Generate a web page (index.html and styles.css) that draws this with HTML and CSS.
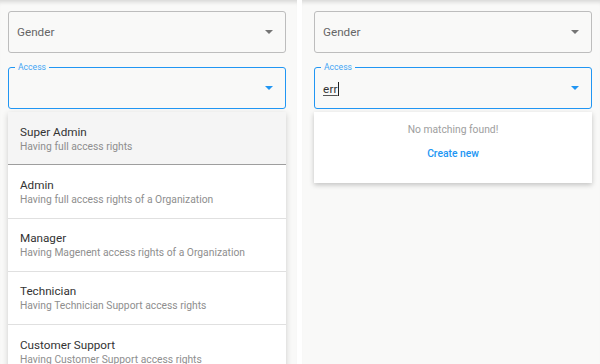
FILE: index.html
```html
<!DOCTYPE html>
<html>
<head>
<meta charset="utf-8">
<link rel="stylesheet" href="styles.css">
</head>
<body>
<div class="screens">
  <section class="panel panel-left">
    <div class="field">
      <span class="value placeholder">Gender</span>
      <svg class="arrow" width="8" height="4" viewBox="0 0 8 4"><path d="M0 0h8L4 4z" fill="#757575"/></svg>
    </div>
    <div class="field focused">
      <span class="label">Access</span>
      <span class="value"></span>
      <svg class="arrow" width="8" height="4" viewBox="0 0 8 4"><path d="M0 0h8L4 4z" fill="#2196f3"/></svg>
    </div>
    <ul class="menu">
      <li class="item active"><div class="title">Super Admin</div><div class="sub">Having full access rights</div></li>
      <li class="item"><div class="title">Admin</div><div class="sub">Having full access rights of a Organization</div></li>
      <li class="item"><div class="title">Manager</div><div class="sub">Having Magenent access rights of a Organization</div></li>
      <li class="item"><div class="title">Technician</div><div class="sub">Having Technician Support access rights</div></li>
      <li class="item"><div class="title">Customer Support</div><div class="sub">Having Customer Support access rights</div></li>
    </ul>
  </section>
  <section class="panel panel-right">
    <div class="field">
      <span class="value placeholder">Gender</span>
      <svg class="arrow" width="8" height="4" viewBox="0 0 8 4"><path d="M0 0h8L4 4z" fill="#757575"/></svg>
    </div>
    <div class="field focused">
      <span class="label">Access</span>
      <span class="value typed"><span class="word">err</span><span class="caret"></span></span>
      <svg class="arrow" width="8" height="4" viewBox="0 0 8 4"><path d="M0 0h8L4 4z" fill="#2196f3"/></svg>
    </div>
    <div class="empty">
      <div class="empty-text">No matching found!</div>
      <div class="create">Create new</div>
    </div>
  </section>
</div>
</body>
</html>
```

FILE: styles.css
```css
* { box-sizing: border-box; }
html, body { margin: 0; padding: 0; background: #ffffff; }
body {
  font-family: Roboto, "Noto Sans", "Liberation Sans", sans-serif;
  width: 600px;
  height: 364px;
  overflow: hidden;
}
.screens {
  display: flex;
  gap: 5px;
  height: 364px;
}
.panel {
  background: #f9f9f8;
  height: 364px;
  padding-top: 11px;
  box-shadow: inset 0 5px 4px -3px rgba(0,0,0,0.14);
  overflow: hidden;
}
.panel-left { width: 297px; padding-left: 8px; padding-right: 11px; }
.panel-right { width: 298px; padding-left: 12px; padding-right: 8px; }

.field {
  position: relative;
  height: 42px;
  border: 1px solid #bdbdbd;
  border-radius: 3px;
  display: flex;
  align-items: center;
  padding: 0 12px 0 8px;
  margin-bottom: 14px;
}
.field.focused {
  border-color: #2196f3;
  height: 42px;
  margin-bottom: 3px;
}
.value {
  flex: 1;
  font-size: 11.7px;
  color: #333;
  display: flex;
  align-items: center;
}
.placeholder { color: #666; font-size: 11.7px; }
.arrow { flex: none; }
.label {
  position: absolute;
  left: 6px;
  top: -6px;
  padding: 0 3px;
  font-size: 8.6px;
  line-height: 10px;
  color: #42a5f5;
  background: #f9f9f8;
}
.typed { padding-top: 1px; }
.word {
  text-decoration: underline;
  text-decoration-color: #555;
  text-underline-offset: 2px;
  letter-spacing: 0.2px;
}
.caret {
  display: inline-block;
  width: 1px;
  height: 14px;
  background: #222;
}

.menu {
  list-style: none;
  margin: 0;
  padding: 0;
  background: #fff;
  box-shadow: 0 2px 6px rgba(0,0,0,0.18);
}
.item {
  height: 53.3px;
  padding: 11.5px 12px 0 12px;
  border-bottom: 1px solid #e0e0e0;
}
.item.active {
  background: #f5f5f5;
  border-bottom-color: #9e9e9e;
}
.title {
  font-size: 11.7px;
  line-height: 16px;
  color: #333;
}
.sub {
  font-size: 10.3px;
  line-height: 14px;
  color: #8e8e8e;
}

.empty {
  background: #fff;
  height: 71px;
  box-shadow: 0 2px 5px rgba(0,0,0,0.22);
  display: flex;
  flex-direction: column;
  align-items: center;
  padding-top: 11px;
}
.empty-text {
  font-size: 10.3px;
  line-height: 14px;
  color: #9e9e9e;
}
.create {
  margin-top: 10px;
  font-size: 10.3px;
  line-height: 14px;
  color: #2196f3;
  font-weight: 500;
}
```
